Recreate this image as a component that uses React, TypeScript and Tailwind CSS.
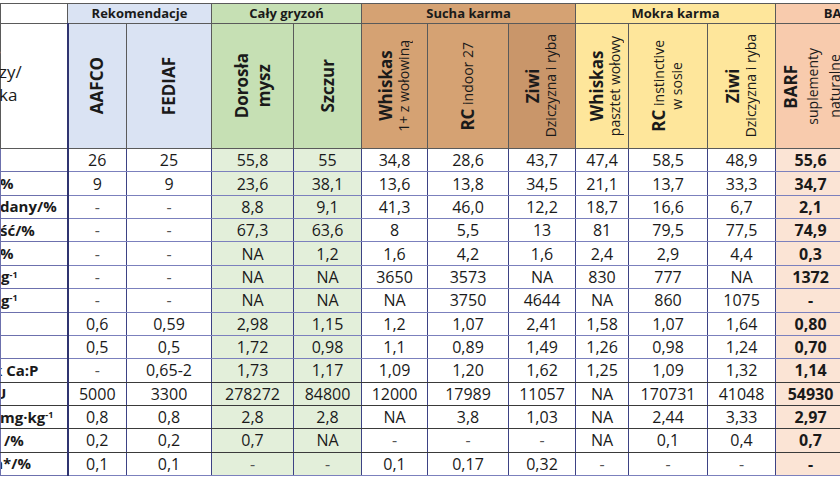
import React from "react";

const FONT = { fontFamily: '"Open Sans", "Liberation Sans", sans-serif' };

const colWidths = [67, 59, 85, 82, 68, 66, 81, 67, 53, 79, 68, 70, 60];

type Kind = "rec" | "green" | "dry" | "wet" | "barf";
const kinds: Kind[] = ["rec", "rec", "green", "green", "dry", "dry", "dry", "wet", "wet", "wet", "barf"];

const labels: React.ReactNode[] = [
  "",
  <span className="-ml-[1px]">%</span>,
  <span className="-ml-[1px]">dany/%</span>,
  <span className="-ml-[1px]">ść/%</span>,
  <span className="-ml-[1px]">%</span>,
  <span>g<sup className="text-[9px]">-1</sup></span>,
  <span>g<sup className="text-[9px]">-1</sup></span>,
  "",
  "",
  <span className="-ml-[8px]">k Ca:P</span>,
  <span className="-ml-[6px]">U</span>,
  <span className="-ml-[1px]">mg·kg<sup className="text-[9px]">-1</sup></span>,
  <span className="-ml-[6px]">) /%</span>,
  <span className="-ml-[7px]">a*/%</span>,
];

const rows: string[][] = [
  ["26", "25", "55,8", "55", "34,8", "28,6", "43,7", "47,4", "58,5", "48,9", "55,6"],
  ["9", "9", "23,6", "38,1", "13,6", "13,8", "34,5", "21,1", "13,7", "33,3", "34,7"],
  ["-", "-", "8,8", "9,1", "41,3", "46,0", "12,2", "18,7", "16,6", "6,7", "2,1"],
  ["-", "-", "67,3", "63,6", "8", "5,5", "13", "81", "79,5", "77,5", "74,9"],
  ["-", "-", "NA", "1,2", "1,6", "4,2", "1,6", "2,4", "2,9", "4,4", "0,3"],
  ["-", "-", "NA", "NA", "3650", "3573", "NA", "830", "777", "NA", "1372"],
  ["-", "-", "NA", "NA", "NA", "3750", "4644", "NA", "860", "1075", "-"],
  ["0,6", "0,59", "2,98", "1,15", "1,2", "1,07", "2,41", "1,58", "1,07", "1,64", "0,80"],
  ["0,5", "0,5", "1,72", "0,98", "1,1", "0,89", "1,49", "1,26", "0,98", "1,24", "0,70"],
  ["-", "0,65-2", "1,73", "1,17", "1,09", "1,20", "1,62", "1,25", "1,09", "1,32", "1,14"],
  ["5000", "3300", "278272", "84800", "12000", "17989", "11057", "NA", "170731", "41048", "54930"],
  ["0,8", "0,8", "2,8", "2,8", "NA", "3,8", "1,03", "NA", "2,44", "3,33", "2,97"],
  ["0,2", "0,2", "0,7", "NA", "-", "-", "-", "NA", "0,1", "0,4", "0,7"],
  ["0,1", "0,1", "-", "-", "0,1", "0,17", "0,32", "-", "-", "-", "-"],
];

const dataBg: Record<Kind, string> = {
  rec: "bg-white",
  green: "bg-[#e3efda]",
  dry: "bg-white",
  wet: "bg-white",
  barf: "bg-[#fbe4d5]",
};

function Rot({ children, lead = "leading-[17px]", extra = "" }: { children: React.ReactNode; lead?: string; extra?: string }) {
  return (
    <div className={`flex h-full items-center justify-center ${extra}`}>
      <div className={`[writing-mode:vertical-rl] rotate-180 whitespace-nowrap text-center text-[#1a1a1a] ${lead}`}>
        {children}
      </div>
    </div>
  );
}

const B = ({ children }: { children: React.ReactNode }) => (
  <span className="text-[17px] font-bold">{children}</span>
);
const N = ({ children }: { children: React.ReactNode }) => (
  <span className="text-[14px] font-normal">{children}</span>
);

const hdrBorder = "border border-[#5a5a5a]";

export default function App() {
  return (
    <div className="h-[480px] w-[840px] overflow-hidden bg-white pt-[3px]" style={FONT}>
      <table className="table-fixed border-collapse" style={{ width: colWidths.reduce((a, b) => a + b, 0) }}>
        <colgroup>
          {colWidths.map((w, i) => (
            <col key={i} style={{ width: w }} />
          ))}
        </colgroup>
        <tbody>
          <tr className="h-[20px]">
            <td className={`${hdrBorder} bg-white p-0`} />
            <td colSpan={2} className={`${hdrBorder} bg-[#dae3f3] p-0 text-center text-[13px] font-bold leading-none text-[#1a1a1a]`}>
              Rekomendacje
            </td>
            <td colSpan={2} className={`${hdrBorder} bg-[#c6e0b4] p-0 text-center text-[13px] font-bold leading-none text-[#1a1a1a]`}>
              Cały gryzoń
            </td>
            <td colSpan={3} className={`${hdrBorder} bg-[#d5a273] p-0 text-center text-[13px] font-bold leading-none text-[#1a1a1a]`}>
              Sucha karma
            </td>
            <td colSpan={3} className={`${hdrBorder} bg-[#fee69b] p-0 text-center text-[13px] font-bold leading-none text-[#1a1a1a]`}>
              Mokra karma
            </td>
            <td colSpan={2} className={`${hdrBorder} bg-[#f8cbad] p-0 text-center text-[13px] font-bold leading-none text-[#1a1a1a]`}>
              BARF
            </td>
          </tr>
          <tr className="h-[125px]">
            <td className={`${hdrBorder} border-r-[#2f3470] border-r-2 bg-white p-0 align-top`}>
              <div className="flex flex-col pt-[13px] text-[17px] leading-[23px] text-[#1a1a1a]">
                <span className="h-[23px] text-[#b9b4e0] text-[12px] -ml-[3px]">,</span>
                <span className="-ml-[2px]">zy/</span>
                <span className="-ml-[2px]">ka</span>
              </div>
            </td>
            <td className={`${hdrBorder} bg-[#dae3f3] p-0`}>
              <Rot><B>AAFCO</B></Rot>
            </td>
            <td className={`${hdrBorder} bg-[#dae3f3] p-0`}>
              <Rot><B>FEDIAF</B></Rot>
            </td>
            <td className={`${hdrBorder} bg-[#c6e0b4] p-0`}>
              <Rot lead="leading-[22px]"><B>Dorosła</B><br /><B>mysz</B></Rot>
            </td>
            <td className={`${hdrBorder} bg-[#c6e0b4] p-0`}>
              <Rot><B>Szczur</B></Rot>
            </td>
            <td className={`${hdrBorder} bg-[#d5a273] p-0`}>
              <Rot><B>Whiskas</B><br /><N>1+ z wołowiną</N></Rot>
            </td>
            <td className={`${hdrBorder} bg-[#d5a273] p-0`}>
              <Rot><B>RC</B><N> indoor 27</N></Rot>
            </td>
            <td className={`${hdrBorder} bg-[#c9966a] p-0`}>
              <Rot><B>Ziwi</B><br /><N>Dziczyzna i ryba</N></Rot>
            </td>
            <td className={`${hdrBorder} bg-[#fee69b] p-0`}>
              <Rot extra="pl-[8px]"><B>Whiskas</B><br /><N>pasztet wołowy</N></Rot>
            </td>
            <td className={`${hdrBorder} bg-[#fee69b] p-0`}>
              <Rot><B>RC</B><N> instinctive</N><br /><N>w sosie</N></Rot>
            </td>
            <td className={`${hdrBorder} bg-[#fee69b] p-0`}>
              <Rot><B>Ziwi</B><br /><N>Dziczyzna i ryba</N></Rot>
            </td>
            <td className={`${hdrBorder} bg-[#f8cbad] p-0`}>
              <Rot lead="leading-[21px]" extra="pl-[4px]"><B>BARF</B><br /><N>suplementy</N><br /><N>naturalne</N></Rot>
            </td>
            <td className={`${hdrBorder} bg-[#f8cbad] p-0`} />
          </tr>
          {rows.map((r, ri) => {
            const darkBottom = ri >= 9 && ri <= 12;
            return (
              <tr key={ri} className="h-[23.36px]">
                <td
                  className={`border border-[#6c70ad] border-r-2 border-r-[#2f3470] bg-white p-0 text-left text-[15px] font-bold leading-none text-[#1a1a1a] overflow-hidden whitespace-nowrap ${
                    darkBottom ? "border-b-[#3a3a3a]" : ""
                  }`}
                >
                  {labels[ri]}
                </td>
                {r.map((v, ci) => {
                  const k = kinds[ci];
                  const bold = k === "barf" || v === "NA";
                  const dash = v === "-";
                  return (
                    <td
                      key={ci}
                      className={`border border-x-[#3d4284] border-y-[#7b80bd] p-0 text-center text-[16px] leading-none ${dataBg[k]} ${
                        bold ? (k === "barf" ? "font-bold" : "font-medium") : "font-normal"
                      } ${dash && k !== "barf" ? "text-[#555]" : "text-[#1a1a1a]"} ${darkBottom ? "border-b-[#3a3a3a]" : ""}`}
                    >
                      {v}
                    </td>
                  );
                })}
                <td className={`border border-x-[#3d4284] border-y-[#7b80bd] bg-white p-0`} />
              </tr>
            );
          })}
        </tbody>
      </table>
    </div>
  );
}
